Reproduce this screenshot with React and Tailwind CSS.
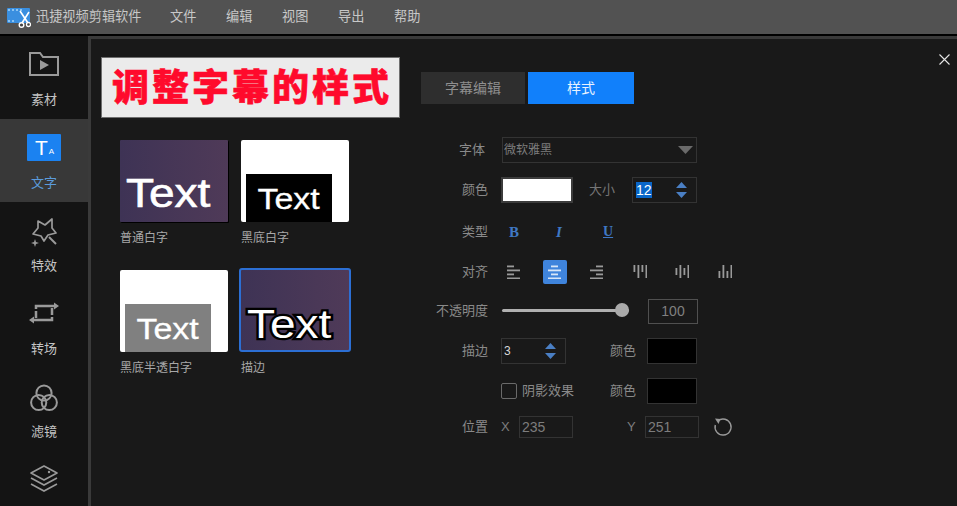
const sans = `font-['Liberation_Sans','Noto_Sans_CJK_SC',sans-serif]`;

function Logo() {
  return (
    <svg width="24" height="24" viewBox="0 0 24 24" className="shrink-0">
      <rect x="0" y="3" width="23" height="15" rx="1" fill="#3a8fe0" />
      <g fill="#8cc4f2">
        <rect x="1" y="4" width="2" height="2" />
        <rect x="5" y="4" width="2" height="2" />
        <rect x="9" y="4" width="2" height="2" />
        <rect x="13" y="4" width="2" height="2" />
        <rect x="1" y="15" width="2" height="2" />
        <rect x="5" y="15" width="2" height="2" />
      </g>
      <path d="M13 6 L21 18 M22 7 L15 18" stroke="#fff" strokeWidth="1.6" fill="none" />
      <circle cx="14.5" cy="20" r="2.3" stroke="#fff" strokeWidth="1.4" fill="#444" />
      <circle cx="21.5" cy="19.5" r="2" stroke="#fff" strokeWidth="1.3" fill="#444" />
    </svg>
  );
}

function NavItem({ icon, label, active }) {
  return (
    <div className={`h-[83px] shrink-0 flex flex-col items-center ${active ? "bg-[#383838]" : ""}`}>
      <div className="h-[54px] w-full flex items-center justify-center mt-[1px]">{icon}</div>
      <span className={`text-[13px] leading-[16px] mt-[1px] ${active ? "text-[#5b9bdc]" : "text-[#c4c4c4]"}`}>{label}</span>
    </div>
  );
}

const stroke = { stroke: "#9a9a9a", strokeWidth: 2, fill: "none" };

const FolderIcon = (
  <svg width="32" height="26" viewBox="0 0 32 26">
    <path d="M2 24 V2 H12 L15 6 H30 V24 Z" {...stroke} />
    <path d="M12 9 L21 14 L12 19 Z" fill="#9a9a9a" />
  </svg>
);
const TextIcon = (
  <div className="w-[34px] h-[27px] bg-[#1b82f1] rounded-[1px] flex items-end justify-center pb-[5px] gap-[1px] text-white pl-[1px]">
    <span className="text-[21px] leading-[17px]">T</span>
    <span className="text-[8px] leading-[8px]">A</span>
  </div>
);
const StarIcon = (
  <svg width="28" height="30" viewBox="0 0 28 30" className="mt-[5px]">
    <path d="M8 3 L15 7 L22 1 L22 10 L26 15 L18 17 L14 23 L11 18 L3 16 L8 10 Z" {...stroke} strokeWidth="1.7" strokeLinejoin="round" />
    <path d="M19 19 L26 26" {...stroke} />
    <path d="M5 21 L6 24 L9 25 L6 26 L5 29 L4 26 L1 25 L4 24 Z" fill="#9a9a9a" />
  </svg>
);
const LoopIcon = (
  <svg width="32" height="26" viewBox="0 0 32 26">
    <path d="M8 18 V6 H26" stroke="#9a9a9a" strokeWidth="2.5" fill="none" strokeDasharray="7 2 40" />
    <path d="M24 8 V20 H5" stroke="#9a9a9a" strokeWidth="2.5" fill="none" strokeDasharray="7 2 40" />
    <path d="M26 2.5 L31 6 L26 9.5 Z M6 16.5 L1 20 L6 23.5 Z" fill="#9a9a9a" />
  </svg>
);
const FilterIcon = (
  <svg width="28" height="28" viewBox="0 0 28 28" className="mt-[3px]">
    <circle cx="14" cy="9" r="7.6" {...stroke} />
    <circle cx="8.7" cy="18.5" r="7.6" {...stroke} />
    <circle cx="19.3" cy="18.5" r="7.6" {...stroke} />
  </svg>
);
const LayersIcon = (
  <svg width="30" height="28" viewBox="0 0 30 28">
    <path d="M15 1 L28 8 L15 15 L2 8 Z" {...stroke} strokeWidth="1.6" strokeLinejoin="round" />
    <circle cx="20" cy="7" r="1.2" fill="#9a9a9a" />
    <path d="M2 13 L15 20 L28 13" {...stroke} strokeWidth="1.6" />
    <path d="M2 19 L15 26 L28 19" {...stroke} strokeWidth="1.6" />
  </svg>
);

const thumbFont = "font-['Liberation_Sans',sans-serif] text-white";

function Thumb({ kind, label }) {
  const purple = "bg-[linear-gradient(90deg,#3e3355,#4f3a58)]";
  return (
    <div className="w-[108px] shrink-0">
      {kind === "plain" && (
        <div className={`h-[82px] ${purple} flex items-end pl-[6px] pb-[9px] rounded-[1px] shadow-[1px_1px_0_#000]`}>
          <span className={`${thumbFont} text-[40px] leading-[40px] origin-left scale-x-[1.15] [-webkit-text-stroke:0.6px_#fff]`}>Text</span>
        </div>
      )}
      {kind === "black" && (
        <div className="h-[82px] bg-white flex items-end pl-[5px] rounded-[2px]">
          <div className={`w-[86px] h-[48px] bg-black flex items-center justify-center ${thumbFont} text-[29px] leading-[32px] [-webkit-text-stroke:0.3px_#fff]`}>
            <span className="scale-x-[1.17] pt-[2px]">Text</span>
          </div>
        </div>
      )}
      {kind === "half" && (
        <div className="h-[82px] bg-white flex items-end pl-[5px] rounded-[2px]">
          <div className={`w-[86px] h-[48px] bg-[#808080] flex items-center justify-center ${thumbFont} text-[29px] leading-[32px] [-webkit-text-stroke:0.3px_#fff]`}>
            <span className="scale-x-[1.17] pt-[2px]">Text</span>
          </div>
        </div>
      )}
      {kind === "stroke" && (
        <div className={`-m-[2px] h-[84px] w-[112px] border-2 border-[#2c6fd4] rounded-[3px] ${purple} flex items-end pl-[6px] pb-[6px]`}>
          <span className={`${thumbFont} text-[40px] leading-[40px] origin-left scale-x-[1.15] [-webkit-text-stroke:4.5px_#000] [paint-order:stroke_fill]`}>Text</span>
        </div>
      )}
      <div className={`text-[12px] leading-[16px] text-[#a8a8a8] ${kind === "stroke" ? "mt-[10px]" : "mt-[8px]"}`}>{label}</div>
    </div>
  );
}

function Spinner() {
  return (
    <div className="flex flex-col gap-[4px] items-center">
      <svg width="11" height="6" viewBox="0 0 11 6"><path d="M5.5 0 L11 6 H0 Z" fill="#4a7fc4" /></svg>
      <svg width="11" height="6" viewBox="0 0 11 6"><path d="M0 0 H11 L5.5 6 Z" fill="#4a7fc4" /></svg>
    </div>
  );
}

const Label = ({ children, w = "w-[68px]", extra = "" }) => (
  <span className={`${w} ${extra} text-right text-[13px] leading-[16px] text-[#8a8a8a] shrink-0`}>{children}</span>
);

function AlignIcon({ rows, vertical, color = "#9a9a9a" }) {
  return (
    <svg width="14" height="14" viewBox="0 0 14 14">
      {rows.map(([s, e], i) =>
        vertical ? (
          <rect key={i} x={i * 4 + 0.5} y={s} width="1.8" height={e - s} fill={color} />
        ) : (
          <rect key={i} x={s} y={i * 4 + 0.5} width={e - s} height="1.8" fill={color} />
        )
      )}
    </svg>
  );
}

export default function App() {
  return (
    <div className={`w-[957px] h-[506px] overflow-hidden flex flex-col bg-[#3a3a3a] ${sans}`}>
      <header className="h-[34px] shrink-0 bg-[#525252] flex items-center pl-[7px] text-[13.2px] text-[#c8c8c8] whitespace-nowrap">
        <Logo />
        <span className="ml-[5px] w-[134px]">迅捷视频剪辑软件</span>
        <nav className="flex gap-[30px]">
          {["文件", "编辑", "视图", "导出", "帮助"].map((t) => (
            <span key={t} className="w-[26px] whitespace-nowrap">{t}</span>
          ))}
        </nav>
      </header>
      <div className="h-[2px] shrink-0 bg-black" />
      <div className="flex-1 flex min-h-0">
        <aside className="w-[88px] shrink-0 bg-[#141414] flex flex-col overflow-hidden">
          <NavItem icon={FolderIcon} label="素材" />
          <NavItem icon={TextIcon} label="文字" active />
          <NavItem icon={StarIcon} label="特效" />
          <NavItem icon={LoopIcon} label="转场" />
          <NavItem icon={FilterIcon} label="滤镜" />
          <NavItem icon={LayersIcon} label="" />
        </aside>
        <main className="flex-1 ml-[3px] mt-[3px] bg-[#191919] relative flex min-w-0">
          <button className="absolute right-[7px] top-[15px] text-[#e0e0e0]">
            <svg width="11" height="11" viewBox="0 0 11 11"><path d="M0.5 0.5 L10.5 10.5 M10.5 0.5 L0.5 10.5" stroke="#e6e6e6" strokeWidth="1.1" /></svg>
          </button>
          <div className="w-[330px] shrink-0 pl-[10px] pt-[18px]">
            <div className="w-[299px] h-[61px] bg-[#ebebeb] border border-[#6f6f6f] flex items-center justify-center text-[#ff0a2c] text-[37px] leading-none font-black tracking-[3px] pl-[3px] pb-[5px] [-webkit-text-stroke:0.6px_#ff0a2c] font-['Noto_Sans_CJK_SC',sans-serif]">
              调整字幕的样式
            </div>
            <div className="ml-[19px] mt-[22px] grid grid-cols-[108px_108px] gap-x-[13px] gap-y-[24px]">
              <Thumb kind="plain" label="普通白字" />
              <Thumb kind="black" label="黑底白字" />
              <Thumb kind="half" label="黑底半透白字" />
              <Thumb kind="stroke" label="描边" />
            </div>
          </div>
          <div className="flex-1 pt-[33px]">
            <div className="flex">
              <div className="w-[104px] h-[32px] bg-[#2e2e2e] flex items-center justify-center text-[14px] text-[#8f8f8f]">字幕编辑</div>
              <div className="ml-[3px] w-[106px] h-[32px] bg-[#1180fb] flex items-center justify-center text-[14px] text-[#e8f2ff]">样式</div>
            </div>
            <div className="mt-[33px] -ml-[1px] flex flex-col text-[13px]">
              <div className="flex items-center h-[26px]">
                <Label extra="pr-[3px]">字体</Label>
                <div className="ml-[14px] w-[195px] h-[26px] border border-[#333] flex items-center justify-between pl-[1px] pr-[3px] text-[12px] text-[#7d7d7d]">
                  <span>微软雅黑</span>
                  <svg width="15" height="8" viewBox="0 0 15 8"><path d="M0 0 H15 L7.5 8 Z" fill="#6a6a6a" /></svg>
                </div>
              </div>
              <div className="flex items-center h-[26px] mt-[14px]">
                <Label>颜色</Label>
                <div className="ml-[13px] w-[72px] h-[26px] border-2 border-[#3c3c3c] bg-white" />
                <span className="ml-[16px] w-[43px] text-[#757575]">大小</span>
                <div className="w-[65px] h-[26px] border border-[#333] flex items-center justify-between pl-[3px] pr-[9px]">
                  <span className="bg-[#0a66c8] text-white text-[14px] leading-[16px]">12</span>
                  <Spinner />
                </div>
              </div>
              <div className="flex items-center h-[26px] mt-[16px]">
                <Label>类型</Label>
                <div className="ml-[21px] flex gap-[37px] font-['Liberation_Serif',serif] text-[#3f78c4] text-[15px] leading-none font-bold">
                  <span className="w-[10px]">B</span>
                  <span className="w-[10px] italic">I</span>
                  <span className="w-[10px] underline text-[14px]">U</span>
                </div>
              </div>
              <div className="flex items-center h-[26px] mt-[14px]">
                <Label>对齐</Label>
                <div className="ml-[19px] flex items-center">
                  <AlignIcon rows={[[0, 7], [0, 13], [0, 7], [0, 13]]} />
                  <div className="ml-[22px] w-[24px] h-[24px] rounded-[2px] bg-[#3f84dc] flex items-center justify-center">
                    <AlignIcon rows={[[3, 10], [0, 13], [3, 10], [0, 13]]} color="#d7e6f8" />
                  </div>
                  <div className="ml-[23px]"><AlignIcon rows={[[6, 13], [0, 13], [6, 13], [0, 13]]} /></div>
                  <div className="ml-[29px]"><AlignIcon vertical rows={[[0, 7], [0, 13], [0, 7], [0, 13]]} /></div>
                  <div className="ml-[28px]"><AlignIcon vertical rows={[[3, 10], [0, 13], [3, 10], [0, 13]]} /></div>
                  <div className="ml-[29px]"><AlignIcon vertical rows={[[6, 13], [0, 13], [6, 13], [0, 13]]} /></div>
                </div>
              </div>
              <div className="flex items-center h-[26px] mt-[13px]">
                <Label>不透明度</Label>
                <div className="ml-[14px] mb-[2px] w-[127px] h-[14px] relative flex items-center">
                  <div className="w-full h-[3px] bg-[#b0b0b0] rounded-full" />
                  <div className="absolute right-0 w-[14px] h-[14px] rounded-full bg-[#aaaaaa]" />
                </div>
                <div className="ml-[19px] w-[50px] h-[25px] border border-[#505050] flex items-center justify-center text-[14px] text-[#808080]">100</div>
              </div>
              <div className="flex items-center h-[26px] mt-[14px]">
                <Label>描边</Label>
                <div className="ml-[13px] w-[65px] h-[26px] border border-[#333] flex items-center justify-between pl-[2px] pr-[9px]">
                  <span className="text-[12px] text-[#d8d8d8]">3</span>
                  <Spinner />
                </div>
                <span className="ml-[44px] w-[37px] text-[#8a8a8a]">颜色</span>
                <div className="w-[50px] h-[26px] bg-black border border-[#333]" />
              </div>
              <div className="flex items-center h-[26px] mt-[14px]">
                <div className="ml-[81px] w-[16px] h-[16px] border border-[#6a6a6a] rounded-[2px]" />
                <span className="ml-[5px] w-[88px] text-[#8a8a8a]">阴影效果</span>
                <span className="w-[37px] text-[#8a8a8a]">颜色</span>
                <div className="w-[50px] h-[26px] bg-black border border-[#333]" />
              </div>
              <div className="flex items-center h-[22px] mt-[12px]">
                <Label>位置</Label>
                <span className="ml-[13px] w-[18px] text-[#7d7d7d]">X</span>
                <div className="w-[54px] h-[22px] border border-[#333] flex items-center pl-[2px] text-[14px] text-[#7d7d7d]">235</div>
                <span className="ml-[54px] w-[18px] text-[#7d7d7d]">Y</span>
                <div className="w-[54px] h-[22px] border border-[#333] flex items-center pl-[2px] text-[14px] text-[#7d7d7d]">251</div>
                <svg className="ml-[14px]" width="20" height="20" viewBox="0 0 20 20">
                  <path d="M5 3.8 A8 8 0 1 1 2.3 8" stroke="#9a9a9a" strokeWidth="1.4" fill="none" />
                  <path d="M2 1.5 L7.5 2 L5.5 7 Z" fill="#9a9a9a" />
                </svg>
              </div>
            </div>
          </div>
        </main>
      </div>
    </div>
  );
}
